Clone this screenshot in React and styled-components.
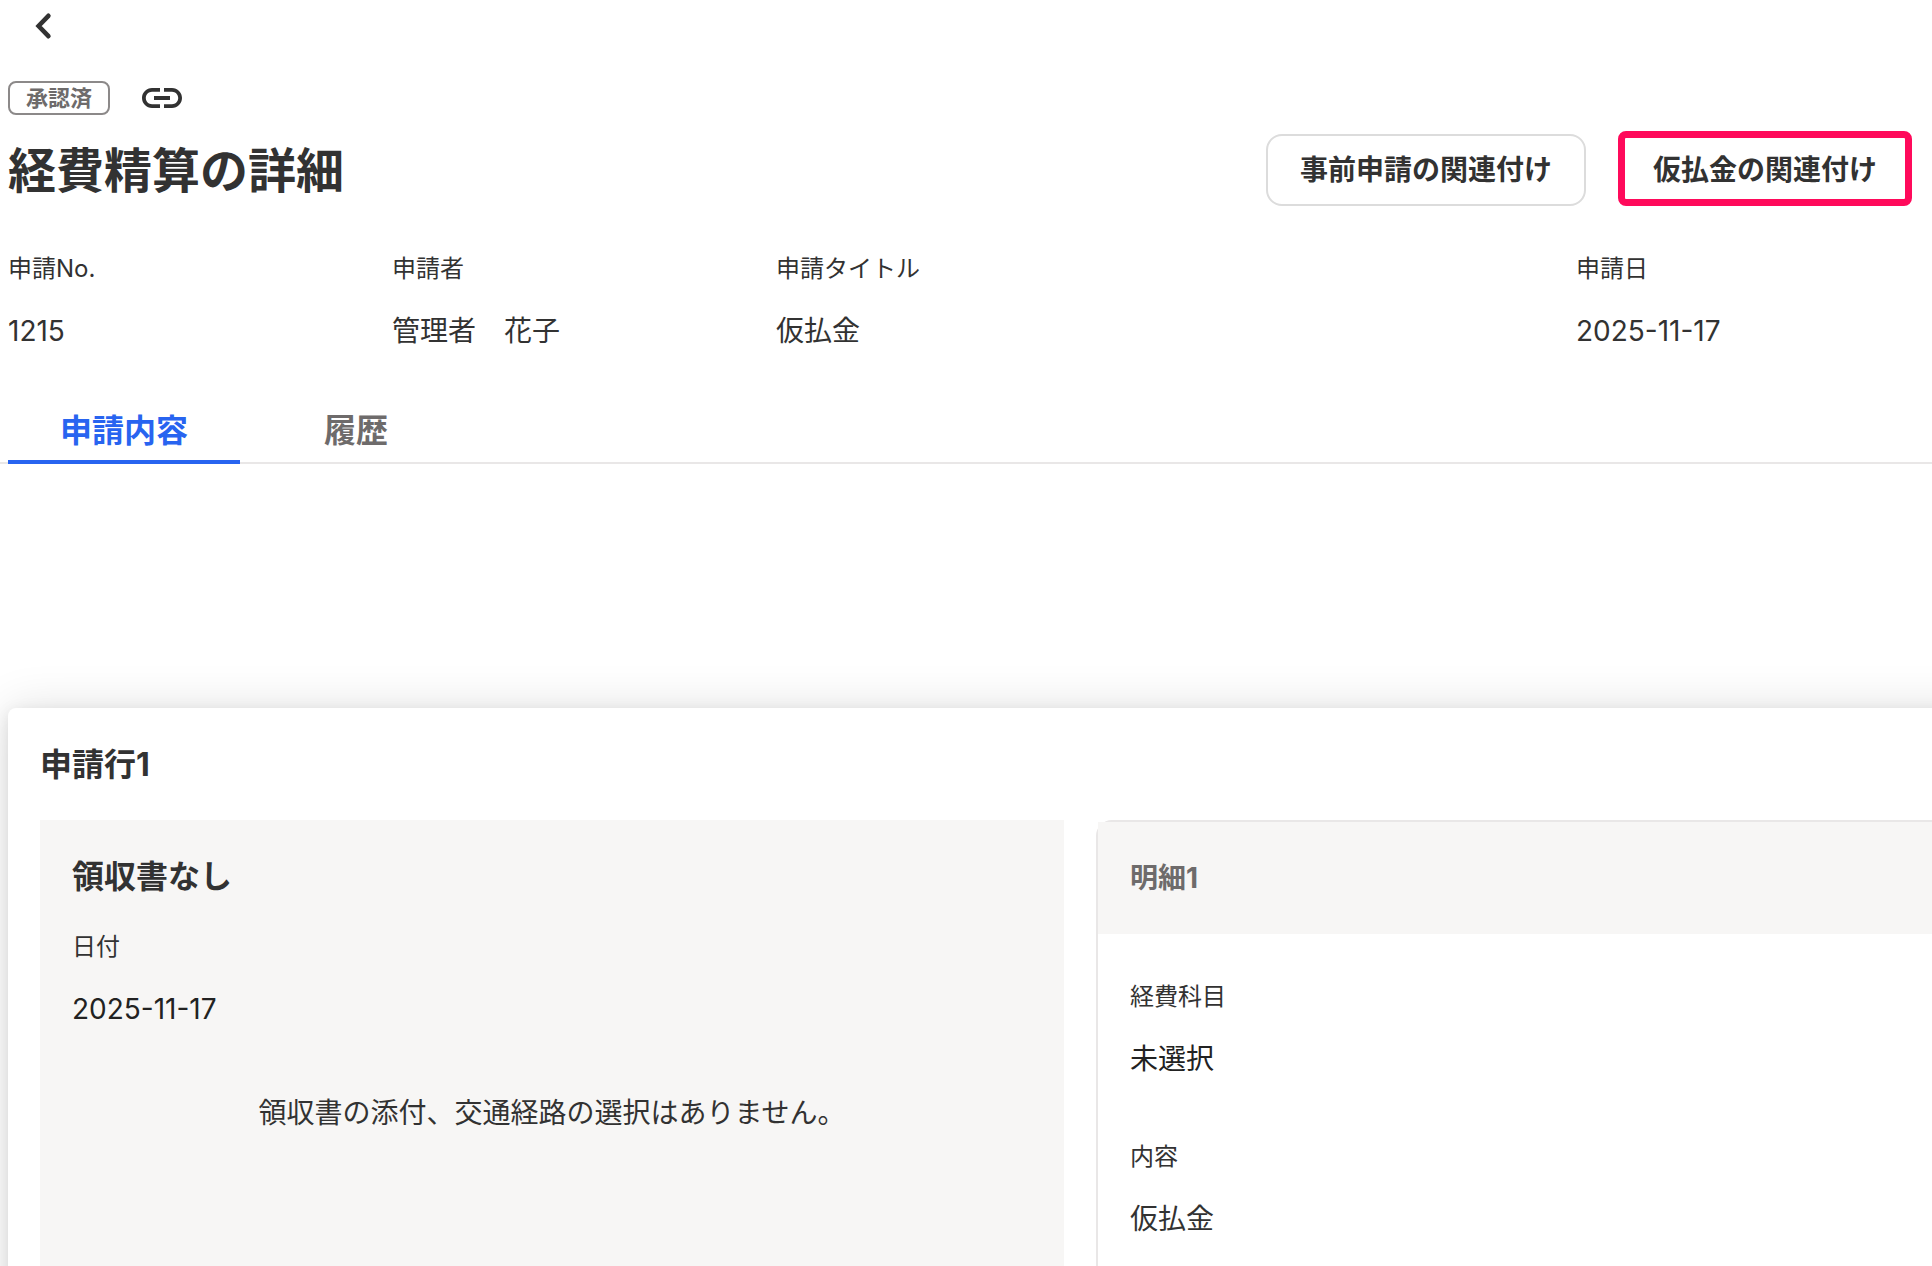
import React, { useState } from "react";
import styled, { createGlobalStyle } from "styled-components";

const GlobalStyle = createGlobalStyle`
    *, *::before, *::after {
        box-sizing: border-box;
    }
    body {
        margin: 0;
        background: #fff;
    }
    body, button {
        font-family: Inter, "Noto Sans CJK JP", sans-serif;
        color: #323232;
    }
    h1, h2, h3, p, dl, dd {
        margin: 0;
    }
`;

const Page = styled.div`
    min-height: 100vh;
    overflow: hidden;
    display: flex;
    flex-direction: column;
    font-size: 28px;
    line-height: 42px;
`;

const IconButton = styled.button`
    display: flex;
    align-items: center;
    justify-content: center;
    width: 48px;
    height: 48px;
    padding: 0;
    border: 0;
    background: none;
    cursor: pointer;
`;

const TopBar = styled.nav`
    display: flex;
    padding: 2px 20px;
`;

const Meta = styled.div`
    display: flex;
    align-items: center;
    gap: 28px;
    padding: 22px 8px 0;
`;

const Badge = styled.span`
    padding: 0 16px;
    border: 2px solid #8c8989;
    border-radius: 8px;
    color: #6e6b6b;
    font-size: 22px;
    font-weight: 700;
    line-height: 30px;
`;

const Header = styled.header`
    display: flex;
    align-items: flex-end;
    justify-content: space-between;
    padding: 9px 20px 0 8px;
`;

const Title = styled.h1`
    font-size: 48px;
    font-weight: 700;
    line-height: 70px;
`;

const Actions = styled.div`
    display: flex;
    align-items: flex-end;
    gap: 32px;
`;

const Button = styled.button`
    padding: 13px 32px;
    border: 2px solid #dcdcdc;
    border-radius: 16px;
    background: #fff;
    font-size: 28px;
    font-weight: 700;
    line-height: 42px;
    cursor: pointer;
`;

const HighlightButton = styled(Button)`
    padding: 11px 28px 8px;
    border: 7px solid #ff0a5b;
    border-radius: 8px;
`;

const Summary = styled.dl`
    display: grid;
    grid-template-columns: 96fr 96fr 200fr 89fr;
    padding: 45px 0 0 8px;
`;

const FieldLabel = styled.dt`
    margin-bottom: 23px;
    font-size: 24px;
    line-height: 36px;
`;

const FieldValue = styled.dd`
    color: ${props => (props.$strong ? "#222" : "#323232")};
`;

const Tabs = styled.div`
    display: flex;
    gap: 32px;
    margin-top: 55px;
    padding-left: 8px;
    border-bottom: 2px solid #e9e7e7;
`;

const Tab = styled.button`
    margin-bottom: -2px;
    padding: 0 52px 5px;
    border: 0;
    border-bottom: 4px solid ${props => (props.$active ? "#2864f0" : "transparent")};
    background: none;
    color: ${props => (props.$active ? "#2864f0" : "#6e6b6b")};
    font-size: 32px;
    font-weight: 700;
    line-height: 48px;
    cursor: pointer;
`;

/* The card runs past the right and bottom edges of the window */
const Card = styled.section`
    flex: 1;
    display: flex;
    flex-direction: column;
    margin: 244px -72px -48px 8px;
    padding: 32px 32px 0;
    border-radius: 8px;
    background: #fff;
    box-shadow: 0 0 48px rgba(0, 0, 0, 0.12), 0 4px 16px rgba(0, 0, 0, 0.1);
`;

const SectionTitle = styled.h2`
    font-size: 32px;
    font-weight: 700;
    line-height: 50px;
`;

const Columns = styled.div`
    flex: 1;
    display: grid;
    grid-template-columns: 256fr 219fr;
    gap: 32px;
    margin-top: 30px;
`;

const Receipt = styled.div`
    padding: 32px;
    background: #f7f6f5;
`;

const ReceiptFields = styled.dl`
    margin-top: 27px;
`;

const EmptyText = styled.p`
    margin-top: 62px;
    text-align: center;
`;

const Detail = styled.div`
    border: 2px solid #e9e7e7;
    border-radius: 16px;
`;

const DetailTitle = styled.h3`
    padding: 32px;
    background: #f7f6f5;
    color: #6e6b6b;
    font-size: 28px;
    font-weight: 700;
    line-height: 48px;
`;

const DetailFields = styled.dl`
    display: grid;
    gap: 59px;
    padding: 45px 32px;
`;

const BackIcon = () => (
    <svg width="48" height="48" viewBox="0 0 48 48" fill="none" stroke="#323232" strokeWidth="4.6" aria-hidden="true">
        <path d="M28.4 13.8L18.6 24l9.8 10.2" strokeLinecap="round" />
    </svg>
);

const LinkIcon = () => (
    <svg width="48" height="48" viewBox="0 0 24 24" fill="#323232" aria-hidden="true">
        <path d="M3.9 12c0-1.71 1.39-3.1 3.1-3.1h4V7H7c-2.76 0-5 2.24-5 5s2.24 5 5 5h4v-1.9H7c-1.71 0-3.1-1.39-3.1-3.1zM8 13h8v-2H8v2zm9-6h-4v1.9h4c1.71 0 3.1 1.39 3.1 3.1s-1.39 3.1-3.1 3.1h-4V17h4c2.76 0 5-2.24 5-5s-2.24-5-5-5z" />
    </svg>
);

const Field = ({ label, value, strong }) => (
    <div>
        <FieldLabel>{label}</FieldLabel>
        <FieldValue $strong={strong}>{value}</FieldValue>
    </div>
);

const summary = [
    { label: "申請No.", value: "1215" },
    { label: "申請者", value: "管理者　花子" },
    { label: "申請タイトル", value: "仮払金" },
    { label: "申請日", value: "2025-11-17" },
];

const tabs = ["申請内容", "履歴"];

export default () => {
    const [active, setActive] = useState(tabs[0]);
    return (
        <Page>
            <GlobalStyle />
            <TopBar>
                <IconButton aria-label="戻る"><BackIcon /></IconButton>
            </TopBar>
            <Meta>
                <Badge>承認済</Badge>
                <IconButton aria-label="リンクをコピー"><LinkIcon /></IconButton>
            </Meta>
            <Header>
                <Title>経費精算の詳細</Title>
                <Actions>
                    <Button>事前申請の関連付け</Button>
                    <HighlightButton>仮払金の関連付け</HighlightButton>
                </Actions>
            </Header>
            <Summary>
                {summary.map(item => <Field key={item.label} {...item} />)}
            </Summary>
            <Tabs role="tablist">
                {tabs.map(tab => (
                    <Tab
                        key={tab}
                        role="tab"
                        aria-selected={tab === active}
                        $active={tab === active}
                        onClick={() => setActive(tab)}
                    >
                        {tab}
                    </Tab>
                ))}
            </Tabs>
            <Card>
                <SectionTitle>申請行1</SectionTitle>
                <Columns>
                    <Receipt>
                        <SectionTitle as="h3">領収書なし</SectionTitle>
                        <ReceiptFields>
                            <Field label="日付" value="2025-11-17" strong />
                        </ReceiptFields>
                        <EmptyText>領収書の添付、交通経路の選択はありません。</EmptyText>
                    </Receipt>
                    <Detail>
                        <DetailTitle>明細1</DetailTitle>
                        <DetailFields>
                            <Field label="経費科目" value="未選択" strong />
                            <Field label="内容" value="仮払金" />
                        </DetailFields>
                    </Detail>
                </Columns>
            </Card>
        </Page>
    )
}
